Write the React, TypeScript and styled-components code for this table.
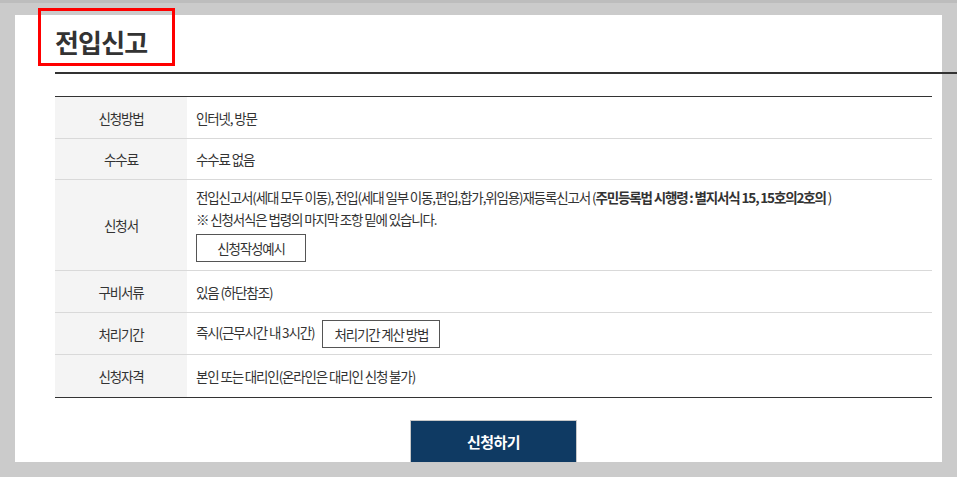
import React from 'react'
import styled, { createGlobalStyle } from 'styled-components'

const GlobalStyle = createGlobalStyle`
    html, body {
        margin: 0;
        padding: 0;
        background: #cbcbcb;
        overflow: hidden;
    }
    body {
        font-family: "Noto Sans CJK KR", "Noto Sans", sans-serif;
        color: #333;
    }
`

const Page = styled.div`
    height: 477px;
    border-top: 3px solid #bdbdbd;
    box-sizing: border-box;
    padding: 12px 15px 0;
`

const Panel = styled.div`
    position: relative;
    height: 447px;
    background: #fff;
    padding: 0 10px 0 40px;
    box-sizing: border-box;
`

const TitleBar = styled.div`
    margin-right: -25px;
    border-bottom: 2px solid #333;
    height: 59px;
    box-sizing: border-box;
    padding-top: 9px;
`

const Title = styled.h2`
    margin: 0;
    font-size: 26px;
    font-weight: 700;
    letter-spacing: -0.8px;
    line-height: 36px;
    color: #333;
`

const Highlight = styled.div`
    position: absolute;
    left: 23px;
    top: -7px;
    width: 137px;
    height: 58px;
    border: 3px solid #f00;
    box-sizing: border-box;
    pointer-events: none;
`

const InfoTable = styled.table`
    width: 100%;
    margin-top: 22px;
    border-collapse: collapse;
    border-top: 1px solid #333;
    border-bottom: 1px solid #333;
    font-size: 13.5px;
    letter-spacing: -1.15px;
`

const Row = styled.tr<{ $h: number }>`
    height: ${p => p.$h}px;
    & + & {
        border-top: 1px solid #d9d9d9;
    }
`

const Head = styled.th`
    width: 132px;
    background: #f4f4f4;
    font-weight: 400;
    text-align: center;
    color: #333;
    padding: 0;
`

const Cell = styled.td`
    padding: 0 0 0 9px;
    color: #333;
    line-height: 22px;
`

const FormCell = styled(Cell)`
    padding-top: 6px;
    padding-bottom: 8px;
`

const Strong = styled.b`
    font-weight: 700;
`

const OutlineButton = styled.button<{ $w: number }>`
    display: inline-block;
    vertical-align: middle;
    width: ${p => p.$w}px;
    height: 28px;
    border: 1px solid #555;
    background: #fff;
    color: #333;
    font-family: inherit;
    font-size: 13.5px;
    letter-spacing: -1.15px;
    padding: 0;
`

const BlockButton = styled(OutlineButton)`
    display: block;
    margin-top: 4px;
`

const InlineButton = styled(OutlineButton)`
    margin-left: 8px;
`

const Actions = styled.div`
    display: flex;
    justify-content: center;
    margin-top: 22px;
`

const Submit = styled.button`
    width: 167px;
    height: 43px;
    background: #0f3a63;
    border: 1px solid #c8c8c8;
    color: #fff;
    font-family: inherit;
    font-size: 15px;
    font-weight: 700;
    letter-spacing: -0.5px;
    padding: 0;
`

const App = () => {
    return (
        <>
            <GlobalStyle />
            <Page>
                <Panel>
                    <Highlight />
                    <TitleBar>
                        <Title>전입신고</Title>
                    </TitleBar>
                    <InfoTable>
                        <tbody>
                            <Row $h={42}>
                                <Head>신청방법</Head>
                                <Cell>인터넷, 방문</Cell>
                            </Row>
                            <Row $h={41}>
                                <Head>수수료</Head>
                                <Cell>수수료 없음</Cell>
                            </Row>
                            <Row $h={91}>
                                <Head>신청서</Head>
                                <FormCell>
                                    전입신고서(세대 모두 이동), 전입(세대 일부 이동,편입,합가,위임용)재등록신고서 (<Strong>주민등록법 시행령 : 별지서식 15, 15호의2호의</Strong> )
                                    <br />
                                    ※ 신청서식은 법령의 마지막 조항 밑에 있습니다.
                                    <BlockButton $w={110}>신청작성예시</BlockButton>
                                </FormCell>
                            </Row>
                            <Row $h={42}>
                                <Head>구비서류</Head>
                                <Cell>있음 (하단참조)</Cell>
                            </Row>
                            <Row $h={42}>
                                <Head>처리기간</Head>
                                <Cell>
                                    즉시(근무시간 내 3시간)
                                    <InlineButton $w={118}>처리기간 계산 방법</InlineButton>
                                </Cell>
                            </Row>
                            <Row $h={43}>
                                <Head>신청자격</Head>
                                <Cell>본인 또는 대리인(온라인은 대리인 신청 불가)</Cell>
                            </Row>
                        </tbody>
                    </InfoTable>
                    <Actions>
                        <Submit>신청하기</Submit>
                    </Actions>
                </Panel>
            </Page>
        </>
    )
}

export default App
